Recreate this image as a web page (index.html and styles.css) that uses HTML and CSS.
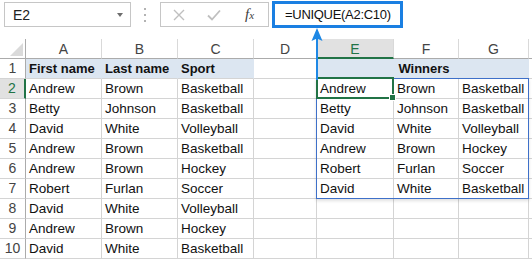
FILE: index.html
```html
<!DOCTYPE html>
<html lang="en">
<head>
    <meta charset="UTF-8">
    <meta name="viewport" content="width=device-width, initial-scale=1.0">
    <title>UNIQUE</title>
    <link rel="stylesheet" href="styles.css">
</head>
<body>
    <div class="pagina">
        <div class="barra">
            <div class="nombre">
                <span>E2</span>
                <span class="flecha"></span>
            </div>
            <div class="puntos"><i></i><i></i><i></i></div>
            <div class="herramientas">
                <svg class="icono" width="12" height="12" viewBox="0 0 12 12"><path d="M1 1 L11 11 M11 1 L1 11" stroke="#bfbfbf" stroke-width="1.4" fill="none"/></svg>
                <svg class="icono" width="14" height="12" viewBox="0 0 14 12"><path d="M1 6.5 L5 10.5 L13 1.5" stroke="#bfbfbf" stroke-width="1.8" fill="none"/></svg>
                <span class="fx">f<small>x</small></span>
            </div>
            <div class="formula">=UNIQUE(A2:C10)</div>
        </div>

        <div class="hoja">
            <div class="esquina"><span></span></div>
            <div class="col">A</div>
            <div class="col">B</div>
            <div class="col">C</div>
            <div class="col">D</div>
            <div class="col activa">E</div>
            <div class="col">F</div>
            <div class="col">G</div>
            <div class="col"></div>

            <div class="fila">1</div>
            <div class="c relleno negrita">First name</div>
            <div class="c relleno negrita">Last name</div>
            <div class="c relleno negrita">Sport</div>
            <div class="c"></div>
            <div class="c relleno negrita centro unida">Winners</div>
            <div class="c"></div>

            <div class="fila activa">2</div>
            <div class="c">Andrew</div><div class="c">Brown</div><div class="c">Basketball</div><div class="c"></div>
            <div class="c">Andrew</div><div class="c">Brown</div><div class="c">Basketball</div><div class="c"></div>

            <div class="fila">3</div>
            <div class="c">Betty</div><div class="c">Johnson</div><div class="c">Basketball</div><div class="c"></div>
            <div class="c">Betty</div><div class="c">Johnson</div><div class="c">Basketball</div><div class="c"></div>

            <div class="fila">4</div>
            <div class="c">David</div><div class="c">White</div><div class="c">Volleyball</div><div class="c"></div>
            <div class="c">David</div><div class="c">White</div><div class="c">Volleyball</div><div class="c"></div>

            <div class="fila">5</div>
            <div class="c">Andrew</div><div class="c">Brown</div><div class="c">Basketball</div><div class="c"></div>
            <div class="c">Andrew</div><div class="c">Brown</div><div class="c">Hockey</div><div class="c"></div>

            <div class="fila">6</div>
            <div class="c">Andrew</div><div class="c">Brown</div><div class="c">Hockey</div><div class="c"></div>
            <div class="c">Robert</div><div class="c">Furlan</div><div class="c">Soccer</div><div class="c"></div>

            <div class="fila">7</div>
            <div class="c">Robert</div><div class="c">Furlan</div><div class="c">Soccer</div><div class="c"></div>
            <div class="c">David</div><div class="c">White</div><div class="c">Basketball</div><div class="c"></div>

            <div class="fila">8</div>
            <div class="c">David</div><div class="c">White</div><div class="c">Volleyball</div><div class="c"></div>
            <div class="c"></div><div class="c"></div><div class="c"></div><div class="c"></div>

            <div class="fila">9</div>
            <div class="c">Andrew</div><div class="c">Brown</div><div class="c">Hockey</div><div class="c"></div>
            <div class="c"></div><div class="c"></div><div class="c"></div><div class="c"></div>

            <div class="fila">10</div>
            <div class="c">David</div><div class="c">White</div><div class="c">Basketball</div><div class="c"></div>
            <div class="c"></div><div class="c"></div><div class="c"></div><div class="c"></div>

            <div class="rango"></div>
            <div class="seleccion"><span></span></div>
        </div>

        <svg class="senal" width="12" height="52" viewBox="0 0 12 52">
            <path d="M6 0 L11.5 13 L6 10.5 L0.5 13 Z" fill="#1e88e5"/>
            <rect x="5" y="9" width="2" height="43" fill="#1e88e5"/>
        </svg>
    </div>
</body>
</html>
```

FILE: styles.css
```css
body {
    margin: 0;
    background-color: #ffffff;
    font-family: "Liberation Sans", Arial, sans-serif;
    overflow: hidden;
}

.pagina {
    position: relative;
    width: 532px;
    height: 259px;
}

.barra {
    display: flex;
    align-items: center;
    height: 29px;
    padding-left: 4px;
    margin-bottom: 10px;
}

.nombre {
    box-sizing: border-box;
    width: 127px;
    height: 25px;
    border: 1px solid #c6c6c6;
    display: flex;
    align-items: center;
    justify-content: space-between;
    padding: 0 7px 0 8px;
    font-size: 14px;
    color: #222222;
}

.flecha {
    width: 0;
    height: 0;
    border-left: 3.5px solid transparent;
    border-right: 3.5px solid transparent;
    border-top: 4px solid #6d6d6d;
}

.puntos {
    display: flex;
    flex-direction: column;
    gap: 4px;
    margin-left: 13px;
    margin-right: 14px;
}

.puntos i {
    display: block;
    width: 2px;
    height: 2px;
    background-color: #b3b3b3;
}

.herramientas {
    box-sizing: border-box;
    width: 109px;
    height: 25px;
    border: 1px solid #c6c6c6;
    display: flex;
    align-items: center;
    padding-left: 12px;
}

.herramientas .icono:nth-child(2) {
    margin-left: 22px;
}

.fx {
    margin-left: 24px;
    font-family: "Liberation Serif", serif;
    font-style: italic;
    font-size: 15px;
    color: #404040;
}

.fx small {
    font-size: 11px;
}

.formula {
    box-sizing: border-box;
    width: 131px;
    height: 27px;
    margin-left: 3px;
    border: 3px solid #1a7fe2;
    padding-left: 10px;
    font-size: 13px;
    letter-spacing: -0.3px;
    line-height: 21px;
    color: #111111;
}

.hoja {
    position: relative;
    display: grid;
    grid-template-columns: 26px 76px 76px 76px 63px 77px 65px 70px 1fr;
    grid-auto-rows: 20px;
}

.hoja > div {
    box-sizing: border-box;
}

.esquina {
    border-right: 1px solid #ababab;
    border-bottom: 1px solid #ababab;
    position: relative;
}

.esquina span {
    position: absolute;
    right: 2px;
    bottom: 2px;
    width: 0;
    height: 0;
    border-left: 13px solid transparent;
    border-bottom: 13px solid #dadada;
}

.col {
    border-right: 1px solid #d9d9d9;
    border-bottom: 1px solid #ababab;
    text-align: center;
    font-size: 14px;
    line-height: 20px;
    color: #444444;
}

.col.activa {
    background-color: #e1e1e1;
    color: #217346;
    border-bottom: 2px solid #217346;
}

.fila {
    border-right: 1px solid #ababab;
    border-bottom: 1px solid #d4d4d4;
    text-align: center;
    font-size: 14px;
    line-height: 19px;
    color: #444444;
}

.fila.activa {
    background-color: #e1e1e1;
    color: #217346;
    border-right: 2px solid #217346;
}

.c {
    border-right: 1px solid #d4d4d4;
    border-bottom: 1px solid #d4d4d4;
    padding: 1px 0 0 3px;
    font-size: 13.5px;
    line-height: 18px;
    color: #111111;
    white-space: nowrap;
    overflow: hidden;
}

.c.relleno {
    background-color: #dce6f1;
    border-right-color: #dce6f1;
}

.c.negrita {
    font-weight: bold;
    font-size: 13px;
}

.c.centro {
    text-align: center;
}

.c.unida {
    grid-column: span 3;
}

.rango {
    position: absolute;
    left: 316px;
    top: 39px;
    width: 213px;
    height: 121px;
    border: 1px solid #3e70c9;
    box-sizing: border-box;
    box-shadow: 0 2px 3px rgba(0, 0, 0, 0.12);
}

.seleccion {
    position: absolute;
    left: 316px;
    top: 38px;
    width: 78px;
    height: 22px;
    border: 2px solid #217346;
    box-sizing: border-box;
}

.seleccion span {
    position: absolute;
    right: -4px;
    bottom: -4px;
    width: 5px;
    height: 5px;
    background-color: #217346;
    border: 1px solid #ffffff;
}

.senal {
    position: absolute;
    left: 311px;
    top: 28px;
}
```
